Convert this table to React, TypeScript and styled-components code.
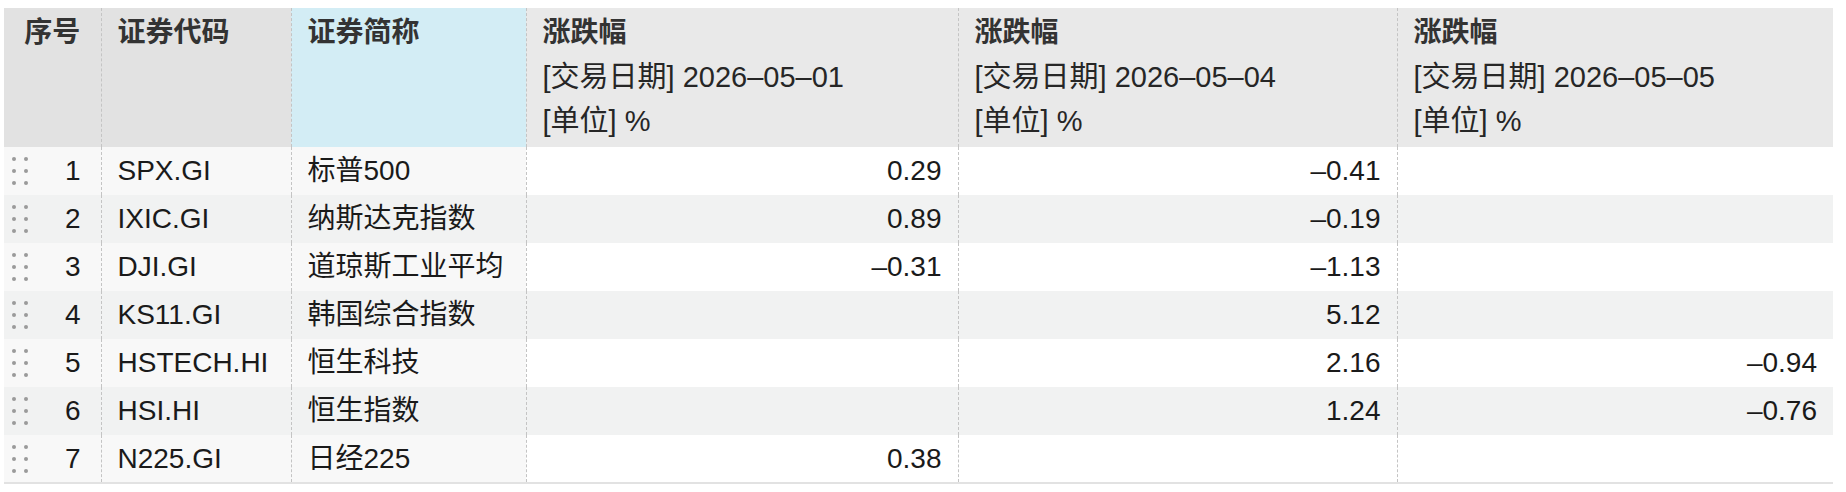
import React from "react";
import styled, { createGlobalStyle } from "styled-components";

const GlobalStyle = createGlobalStyle`
  html, body {
    margin: 0;
    padding: 0;
    background: #ffffff;
  }
  body {
    font-family: "Liberation Sans", "Noto Sans CJK SC", sans-serif;
    color: #1f1f1f;
  }
`;

const Page = styled.div`
  padding: 8px 0 0 4px;
`;

const Table = styled.table`
  width: 1829px;
  table-layout: fixed;
  border-collapse: collapse;
  font-size: 28px;
  border-bottom: 2px solid #e2e2e2;
`;

const HeadCell = styled.th<{ $tone?: "dark" | "light" | "blue"; $center?: boolean }>`
  height: 136px;
  padding: 3px 16px 0;
  vertical-align: top;
  text-align: ${(p) => (p.$center ? "center" : "left")};
  font-weight: 400;
  line-height: 44px;
  color: #262626;
  background: ${(p) =>
    p.$tone === "blue" ? "#d3edf5" : p.$tone === "dark" ? "#e2e2e2" : "#e9e9e9"};
  border-left: 1px dashed #c4c4c4;

  &:first-child {
    border-left: none;
  }
`;

const HeadTitle = styled.div`
  font-weight: 700;
  color: #333333;
`;

const HeadLine = styled.div`
  white-space: nowrap;
  font-size: 29px;
`;

const Row = styled.tr<{ $even: boolean }>`
  height: 48px;
  background: ${(p) => (p.$even ? "#f1f2f2" : "#ffffff")};
`;

const Cell = styled.td<{ $frozen?: boolean; $even?: boolean; $right?: boolean }>`
  padding: 0 16px;
  white-space: nowrap;
  line-height: 46px;
  text-align: ${(p) => (p.$right ? "right" : "left")};
  background: ${(p) => (p.$frozen && !p.$even ? "#f8f8f8" : "transparent")};
  border-left: 1px dashed #c4c4c4;
  color: #1a1a1a;

  &:first-child {
    border-left: none;
  }
`;

const IndexCell = styled(Cell)`
  padding: 0 20px 0 0;
`;

const IndexInner = styled.div`
  display: flex;
  align-items: center;
  justify-content: space-between;
`;

const Handle = styled.span`
  display: grid;
  grid-template-columns: 4px 4px;
  grid-auto-rows: 4px;
  column-gap: 8px;
  row-gap: 8px;
  margin-left: 8px;

  i {
    display: block;
    width: 4px;
    height: 4px;
    border-radius: 50%;
    background: #9a9a9a;
  }
`;

type Item = {
  code: string;
  name: string;
  values: (string | null)[];
};

const dates = ["2026–05–01", "2026–05–04", "2026–05–05"];

const rows: Item[] = [
  { code: "SPX.GI", name: "标普500", values: ["0.29", "–0.41", null] },
  { code: "IXIC.GI", name: "纳斯达克指数", values: ["0.89", "–0.19", null] },
  { code: "DJI.GI", name: "道琼斯工业平均", values: ["–0.31", "–1.13", null] },
  { code: "KS11.GI", name: "韩国综合指数", values: [null, "5.12", null] },
  { code: "HSTECH.HI", name: "恒生科技", values: [null, "2.16", "–0.94"] },
  { code: "HSI.HI", name: "恒生指数", values: [null, "1.24", "–0.76"] },
  { code: "N225.GI", name: "日经225", values: ["0.38", null, null] },
];

const widths = [97, 190, 235, 432, 439, 436];

export default function App() {
  return (
    <Page>
      <GlobalStyle />
      <Table>
        <colgroup>
          {widths.map((w, i) => (
            <col key={i} style={{ width: w }} />
          ))}
        </colgroup>
        <thead>
          <tr>
            <HeadCell $tone="dark" $center>
              <HeadTitle>序号</HeadTitle>
            </HeadCell>
            <HeadCell $tone="dark">
              <HeadTitle>证券代码</HeadTitle>
            </HeadCell>
            <HeadCell $tone="blue">
              <HeadTitle>证券简称</HeadTitle>
            </HeadCell>
            {dates.map((d) => (
              <HeadCell key={d}>
                <HeadTitle>涨跌幅</HeadTitle>
                <HeadLine>[交易日期] {d}</HeadLine>
                <HeadLine>[单位] %</HeadLine>
              </HeadCell>
            ))}
          </tr>
        </thead>
        <tbody>
          {rows.map((r, i) => {
            const even = i % 2 === 1;
            return (
              <Row key={r.code} $even={even}>
                <IndexCell $frozen $even={even}>
                  <IndexInner>
                    <Handle>
                      <i />
                      <i />
                      <i />
                      <i />
                      <i />
                      <i />
                    </Handle>
                    <span>{i + 1}</span>
                  </IndexInner>
                </IndexCell>
                <Cell $frozen $even={even}>
                  {r.code}
                </Cell>
                <Cell $frozen $even={even}>
                  {r.name}
                </Cell>
                {r.values.map((v, j) => (
                  <Cell key={j} $right>
                    {v ?? ""}
                  </Cell>
                ))}
              </Row>
            );
          })}
        </tbody>
      </Table>
    </Page>
  );
}
